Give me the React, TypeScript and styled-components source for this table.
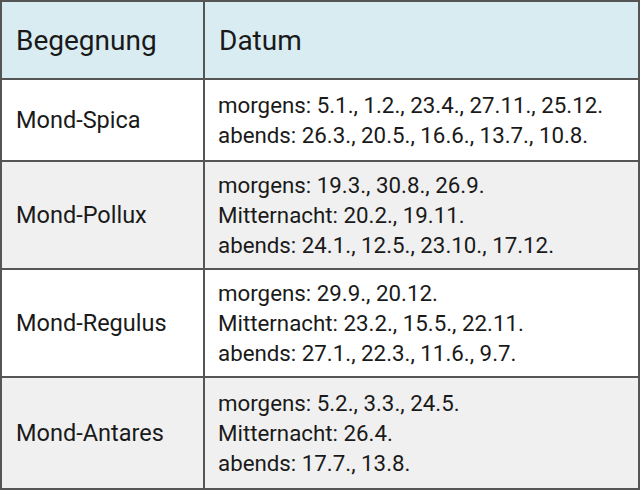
import styled, { createGlobalStyle } from "styled-components";

const GlobalStyle = createGlobalStyle`
  html, body {
    margin: 0;
    padding: 0;
    background: #ffffff;
    overflow: hidden;
  }
`;

const Table = styled.table`
  box-sizing: border-box;
  width: 640px;
  height: 490px;
  border-collapse: separate;
  border-spacing: 0;
  table-layout: fixed;
  font-family: Roboto, "Liberation Sans", sans-serif;
  color: #1a1a1a;
  border: 2px solid #555;
`;

const NameCol = styled.col`
  width: 203px;
`;

const HeadRow = styled.tr`
  height: 78px;
`;

const HeadCell = styled.th`
  background: #d8ecf2;
  text-align: left;
  font-weight: 400;
  font-size: 28px;
  padding: 0 12px 0 14px;
  border-bottom: 2px solid #555;

  &:first-child {
    border-right: 2px solid #555;
  }
`;

const Row = styled.tr<{ $shaded?: boolean; $h: number }>`
  background: ${(p) => (p.$shaded ? "#f0f0f0" : "#ffffff")};
  height: ${(p) => p.$h}px;

  &:not(:last-child) > td {
    border-bottom: 2px solid #555;
  }
`;

const NameCell = styled.td`
  font-size: 23.5px;
  padding: 0 12px 0 14px;
  border-right: 2px solid #555;
  vertical-align: middle;
  white-space: nowrap;
`;

const DateCell = styled.td`
  font-size: 22.3px;
  line-height: 30px;
  padding: 0 12px 0 13px;
  vertical-align: middle;
`;

const Line = styled.div`
  white-space: nowrap;
`;

const rows = [
  {
    name: "Mond-Spica",
    h: 82,
    lines: [
      "morgens: 5.1., 1.2., 23.4., 27.11., 25.12.",
      "abends: 26.3., 20.5., 16.6., 13.7., 10.8.",
    ],
  },
  {
    name: "Mond-Pollux",
    h: 108,
    lines: [
      "morgens: 19.3., 30.8., 26.9.",
      "Mitternacht: 20.2., 19.11.",
      "abends: 24.1., 12.5., 23.10., 17.12.",
    ],
  },
  {
    name: "Mond-Regulus",
    h: 108,
    lines: [
      "morgens: 29.9., 20.12.",
      "Mitternacht: 23.2., 15.5., 22.11.",
      "abends: 27.1., 22.3., 11.6., 9.7.",
    ],
  },
  {
    name: "Mond-Antares",
    h: 110,
    lines: [
      "morgens: 5.2., 3.3., 24.5.",
      "Mitternacht: 26.4.",
      "abends: 17.7., 13.8.",
    ],
  },
];

const App = () => {
  return (
    <>
      <GlobalStyle />
      <Table>
        <colgroup>
          <NameCol />
          <col />
        </colgroup>
        <thead>
          <HeadRow>
            <HeadCell>Begegnung</HeadCell>
            <HeadCell>Datum</HeadCell>
          </HeadRow>
        </thead>
        <tbody>
          {rows.map((row, i) => (
            <Row key={row.name} $shaded={i % 2 === 1} $h={row.h}>
              <NameCell>{row.name}</NameCell>
              <DateCell>
                {row.lines.map((line) => (
                  <Line key={line}>{line}</Line>
                ))}
              </DateCell>
            </Row>
          ))}
        </tbody>
      </Table>
    </>
  );
};

export default App;
